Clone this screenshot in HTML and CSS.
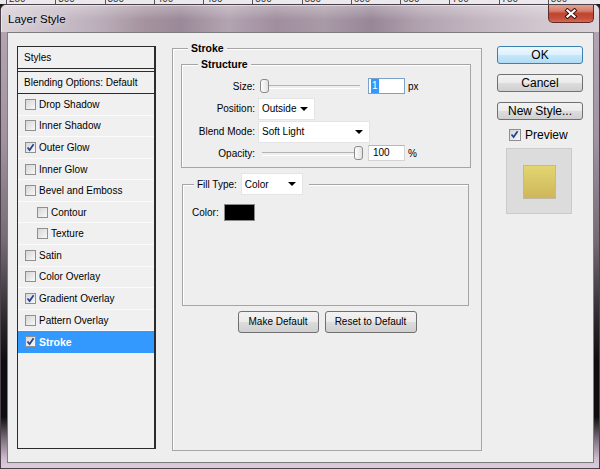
FILE: index.html
```html
<!DOCTYPE html>
<html lang="en">

<head>
    <meta charset="UTF-8">
    <meta name="viewport" content="width=device-width, initial-scale=1.0">
    <title>Layer Style</title>
    <link rel="stylesheet" href="styles.css">
</head>

<body>
    <!-- ruler of the document behind the dialog -->
    <div class="ruler">
        <span>250</span><span>300</span><span>350</span><span>400</span><span>450</span><span>500</span><span>550</span><span>600</span><span>650</span><span>700</span><span>750</span><span>800</span>
    </div>

    <div class="window">
        <div class="titlebar">
            <span class="title">Layer Style</span>
            <span class="close_btn">
                <svg width="14" height="11" viewBox="0 0 14 11">
                    <path d="M3.5 2.5 L10.5 8.5 M10.5 2.5 L3.5 8.5" stroke="#3d1512" stroke-width="4.2" stroke-linecap="square" />
                    <path d="M3.5 2.5 L10.5 8.5 M10.5 2.5 L3.5 8.5" stroke="#fff" stroke-width="2.2" stroke-linecap="square" />
                </svg>
            </span>
        </div>

        <div class="frame">
            <div class="client">
                <!-- 左侧样式列表 -->
                <div class="styles_list">
                    <div class="list_head">Styles</div>
                    <div class="list_blend">Blending Options: Default</div>
                    <ul>
                        <li><i class="cb"></i>Drop Shadow</li>
                        <li><i class="cb"></i>Inner Shadow</li>
                        <li><i class="cb"><svg viewBox="0 0 9 9"><path d="M1.5 4.5 L3.6 7 L7.6 1.2" /></svg></i>Outer Glow</li>
                        <li><i class="cb"></i>Inner Glow</li>
                        <li><i class="cb"></i>Bevel and Emboss</li>
                        <li class="sub"><i class="cb"></i>Contour</li>
                        <li class="sub"><i class="cb"></i>Texture</li>
                        <li><i class="cb"></i>Satin</li>
                        <li><i class="cb"></i>Color Overlay</li>
                        <li><i class="cb"><svg viewBox="0 0 9 9"><path d="M1.5 4.5 L3.6 7 L7.6 1.2" /></svg></i>Gradient Overlay</li>
                        <li><i class="cb"></i>Pattern Overlay</li>
                        <li class="current"><i class="cb"><svg viewBox="0 0 9 9"><path d="M1.5 4.5 L3.6 7 L7.6 1.2" /></svg></i>Stroke</li>
                    </ul>
                </div>

                <!-- 中间设置区 -->
                <fieldset class="group stroke_group">
                    <legend>Stroke</legend>

                    <fieldset class="group structure">
                        <legend>Structure</legend>
                        <div class="row row_size">
                            <label>Size:</label>
                            <div class="slider">
                                <span class="thumb" style="left: 0px;"></span>
                            </div>
                            <span class="field focus"><em>1</em></span>
                            <span class="unit">px</span>
                        </div>
                        <div class="row row_pos">
                            <label>Position:</label>
                            <div class="select pos_select"><span>Outside</span><i class="arrow"></i></div>
                        </div>
                        <div class="row row_blend">
                            <label>Blend Mode:</label>
                            <div class="select blend_select"><span>Soft Light</span><i class="arrow"></i></div>
                        </div>
                        <div class="row row_opacity">
                            <label>Opacity:</label>
                            <div class="slider opacity_slider">
                                <span class="thumb" style="left: 92px;"></span>
                            </div>
                            <span class="field">100</span>
                            <span class="unit">%</span>
                        </div>
                    </fieldset>

                    <fieldset class="group fill">
                        <legend>
                            <span class="fill_label">Fill Type:</span>
                            <span class="select fill_select"><span>Color</span><i class="arrow"></i></span>
                        </legend>
                        <div class="fill_body">
                            <span>Color:</span>
                            <span class="swatch"></span>
                        </div>
                    </fieldset>

                    <div class="defaults">
                        <span class="btn make_btn">Make Default</span>
                        <span class="btn reset_btn">Reset to Default</span>
                    </div>
                </fieldset>

                <!-- 右侧按钮 -->
                <div class="side">
                    <span class="btn big ok">OK</span>
                    <span class="btn big">Cancel</span>
                    <span class="btn big">New Style...</span>
                    <div class="preview_check">
                        <i class="cb"><svg viewBox="0 0 9 9"><path d="M1.5 4.5 L3.6 7 L7.6 1.2" /></svg></i>Preview
                    </div>
                    <div class="preview_box">
                        <span class="preview_swatch"></span>
                    </div>
                </div>
            </div>
        </div>
    </div>
</body>

</html>
```

FILE: styles.css
```css
* {
    margin: 0;
    padding: 0;
    box-sizing: border-box;
}

li {
    list-style: none;
}

body {
    width: 600px;
    height: 469px;
    overflow: hidden;
    background-color: #1b1b1b;
    font-family: "Liberation Sans", Arial, sans-serif;
    font-size: 10px;
    color: #000;
}

/* 背景里的标尺 */
.ruler {
    display: flex;
    height: 4px;
    padding-left: 6px;
    overflow: hidden;
    background-color: #ece9ec;
}

.ruler span {
    flex: 0 0 49.25px;
    height: 11px;
    margin-top: -7px;
    padding-left: 2px;
    border-left: 1px solid #555;
    font-size: 10px;
    line-height: 11px;
    color: #333;
}

/* 窗口外框 */
.window {
    display: flex;
    flex-direction: column;
    height: 465px;
    border: 1px solid #4b424b;
    border-radius: 6px 6px 0 0;
    overflow: hidden;
}

.titlebar {
    display: flex;
    justify-content: space-between;
    height: 27px;
    padding-left: 7px;
    background:
        linear-gradient(to bottom, rgba(255, 255, 255, .3), rgba(255, 255, 255, 0) 55%),
        linear-gradient(90deg, #d9d1d8 0%, #cbc0ca 8%, #bcafbb 16%, #a5939f 24%, #9a8998 30%, #b3a4b1 38%, #a08e9e 46%, #a99aa7 54%, #988797 62%, #b1a2af 70%, #c3b6c1 80%, #d0c6ce 90%, #dad2d9 100%);
    box-shadow: inset 1px 1px 0 rgba(255, 255, 255, .45);
}

.title {
    align-self: center;
    margin-top: 1px;
    font-size: 11.5px;
    text-shadow: 0 0 6px rgba(255, 255, 255, .9);
}

.close_btn {
    display: flex;
    align-items: center;
    justify-content: center;
    width: 46px;
    height: 19px;
    margin-top: -1px;
    margin-right: 5px;
    border: 1px solid #5e2a26;
    border-top: none;
    border-radius: 0 0 5px 5px;
    background: linear-gradient(to bottom, #e6a899 0%, #d57b6a 40%, #c2452f 52%, #c54f3a 80%, #d46c55 100%);
}

.close_btn svg {
    display: block;
}

.frame {
    flex: 1;
    padding: 0 5px 5px 6px;
    background: linear-gradient(to bottom, #b2a5b1 0, #a092a0 110px, #756a74 210px, #2a262a 290px, #0e0e0e 330px, #0e0e0e 385px, #8a7c8a 410px, #d2c1d2 428px, #dccddc 100%);
}

.client {
    display: flex;
    align-items: flex-start;
    height: 100%;
    padding: 13px 0 0 9px;
    border: 1px solid #7d7d7d;
    background-color: #eeeeee;
}

/* 左侧列表 */
.styles_list {
    flex: 0 0 139px;
    height: 403px;
    border: 1px solid #2c2c2c;
    border-right-width: 2px;
    background-color: #f0f0f0;
}

.list_head,
.list_blend {
    height: 22px;
    padding-left: 6px;
    line-height: 21px;
    border-bottom: 1px solid #2c2c2c;
}

.list_blend {
    height: 23px;
    margin-top: 2px;
    border-top: 1px solid #2c2c2c;
}

.styles_list li {
    display: flex;
    align-items: center;
    height: 21.58px;
    padding-left: 7px;
    border-bottom: 1px solid #fbfbfb;
}

.styles_list li.sub {
    padding-left: 19px;
}

.styles_list li.current {
    background-color: #3399ff;
    border-bottom-color: #3399ff;
    color: #fff;
    font-weight: bold;
    font-size: 10.5px;
}

.cb {
    display: inline-block;
    flex: 0 0 11px;
    width: 11px;
    height: 11px;
    margin-right: 3px;
    border: 1px solid #8e8f8f;
    background: linear-gradient(135deg, #d6d6d6, #f8f8f8);
}

.cb svg {
    display: block;
    width: 9px;
    height: 9px;
}

.cb path {
    fill: none;
    stroke: #24408e;
    stroke-width: 1.7;
}

/* 分组框 */
.group {
    border: 1px solid #a5a5a5;
    box-shadow: inset 1px 1px 0 #fff;
}

.group legend {
    padding: 0 3px;
    background-color: #eeeeee;
    font-weight: bold;
    font-size: 10.5px;
    line-height: 12px;
}

.stroke_group {
    flex: 0 0 310px;
    height: 409px;
    margin-top: -4px;
    margin-left: 16px;
}

.stroke_group > legend {
    margin-left: 15px;
}

.structure {
    margin: 4px 10px 0 8px;
    padding: 5px 0 4px;
}

.structure > legend {
    margin-left: 16px;
}

.row {
    display: flex;
    align-items: center;
    height: 22px;
}

.row_pos,
.row_blend {
    height: 23px;
}

.row_opacity {
    height: 20px;
}

.row label {
    width: 74px;
    padding-right: 1px;
    text-align: right;
}

.slider {
    position: relative;
    width: 100px;
    height: 14px;
    margin-left: 4px;
}

.slider::before {
    content: '';
    position: absolute;
    top: 6px;
    left: 0;
    right: 0;
    height: 2px;
    border-top: 1px solid #b4b4b4;
    border-bottom: 1px solid #fff;
}

.opacity_slider {
    width: 98px;
    margin-left: 6px;
}

.thumb {
    position: absolute;
    top: 0;
    width: 9px;
    height: 14px;
    border: 1px solid #8b8b8b;
    border-radius: 3px;
    background: linear-gradient(to right, #fdfdfd, #e2e2e2);
}

.field {
    width: 37px;
    height: 16px;
    margin-left: 8px;
    padding-left: 4px;
    border: 1px solid #d4d4d4;
    border-top-color: #b8b8b8;
    background-color: #fff;
    line-height: 14px;
}

.field.focus {
    border-color: #7aa2c9;
    padding-left: 2px;
}

.field em {
    display: inline-block;
    padding: 0 1px;
    font-style: normal;
    background-color: #3399ff;
    color: #fff;
}

.unit {
    margin-left: 3px;
}

.select {
    display: flex;
    align-items: center;
    justify-content: space-between;
    height: 22px;
    margin-left: 2px;
    padding: 0 6px 0 3px;
    border: 1px solid #e4e4e4;
    background-color: #fff;
    font-weight: normal;
    font-size: 10px;
}

.pos_select {
    width: 57px;
}

.blend_select {
    width: 112px;
}

.arrow {
    width: 0;
    height: 0;
    border-top: 4px solid #000;
    border-left: 4px solid transparent;
    border-right: 4px solid transparent;
}

.fill {
    margin: 5px 12px 0 9px;
}

.fill > legend {
    margin-left: 11px;
    padding: 0 6px 0 3px;
    line-height: normal;
}

.fill_label {
    display: inline-block;
    vertical-align: middle;
    font-weight: normal;
    font-size: 10px;
}

.fill_select {
    display: inline-flex;
    vertical-align: middle;
    width: 62px;
    margin-left: 1px;
}

.fill_body {
    display: flex;
    align-items: center;
    height: 110px;
    align-items: flex-start;
    padding: 9px 0 0 9px;
    line-height: 17px;
}

.swatch {
    width: 31px;
    height: 17px;
    margin-left: 5px;
    border: 1px solid #8a8a8a;
    background-color: #000;
}

.defaults {
    display: flex;
    justify-content: center;
    gap: 6px;
    margin-top: 5px;
}

.btn {
    display: block;
    height: 22px;
    border: 1px solid #707070;
    border-radius: 3px;
    background: linear-gradient(to bottom, #f2f2f2 0%, #ebebeb 50%, #dddddd 51%, #cfcfcf 100%);
    text-align: center;
    line-height: 20px;
}

.make_btn {
    width: 81px;
}

.reset_btn {
    width: 92px;
}

/* 右侧 */
.side {
    flex: 0 0 86px;
    margin-left: 15px;
}

.btn.big {
    height: 18px;
    margin-bottom: 10px;
    font-size: 12px;
    line-height: 16px;
}

.btn.ok {
    border-color: #3c7fb1;
    background: linear-gradient(to bottom, #eef8fe 0%, #dcf1fc 50%, #c4e7fb 51%, #b2dcf4 100%);
}

.preview_check {
    display: flex;
    align-items: center;
    height: 12px;
    margin-top: -1px;
    padding-left: 12px;
    font-size: 12px;
}

.preview_check .cb {
    flex-basis: 12px;
    width: 12px;
    height: 12px;
    margin-right: 4px;
}

.preview_box {
    display: flex;
    align-items: center;
    justify-content: center;
    width: 66px;
    height: 66px;
    margin: 7px 0 0 9px;
    border: 1px solid #cbcbcb;
    background-color: #dcdcdc;
}

.preview_swatch {
    width: 33px;
    height: 34px;
    margin-top: 2px;
    border: 1px solid #bdb9a6;
    background: linear-gradient(to bottom, #e4d571, #cdb65a);
}
```
